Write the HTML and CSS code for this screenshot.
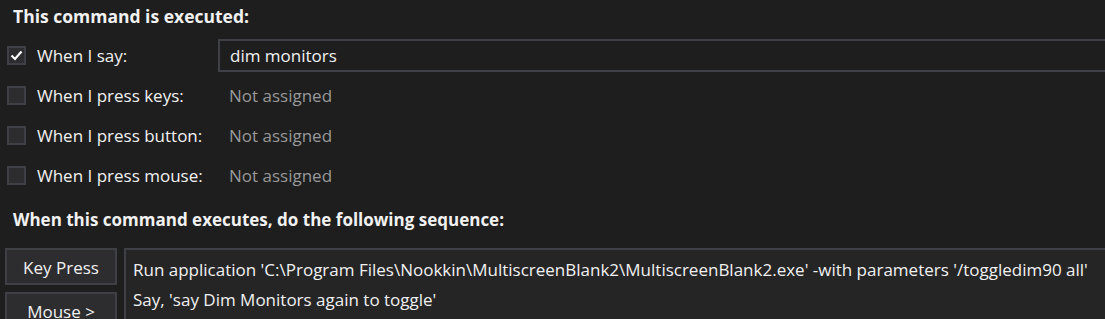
FILE: index.html
```html
<!DOCTYPE html>
<html>
<head>
<meta name="viewport" content="width=device-width, initial-scale=1">
<link rel="stylesheet" href="styles.css">
</head>
<body>

<h3 class="heading">This command is executed:</h3>

<div class="triggers">
  <div class="trigger">
    <span class="check on">
      <svg width="13" height="11" viewBox="0 0 13 11"><path d="M1.5 5.5 L5 9 L11.5 1.5" fill="none" stroke="#ffffff" stroke-width="2.2"/></svg>
    </span>
    <span class="label">When I say:</span>
    <span class="phrase">dim monitors</span>
  </div>
  <div class="trigger">
    <span class="check"></span>
    <span class="label">When I press keys:</span>
    <span class="value">Not assigned</span>
  </div>
  <div class="trigger">
    <span class="check"></span>
    <span class="label">When I press button:</span>
    <span class="value">Not assigned</span>
  </div>
  <div class="trigger">
    <span class="check"></span>
    <span class="label">When I press mouse:</span>
    <span class="value">Not assigned</span>
  </div>
</div>

<h3 class="heading second">When this command executes, do the following sequence:</h3>

<div class="sequence">
  <div class="buttons">
    <button type="button" class="seqbtn">Key Press</button>
    <button type="button" class="seqbtn">Mouse &gt;</button>
  </div>
  <div class="actions">
    <div class="action">Run application 'C:\Program Files\Nookkin\MultiscreenBlank2\MultiscreenBlank2.exe' -with parameters '/toggledim90 all'</div>
    <div class="action">Say, 'say Dim Monitors again to toggle'</div>
  </div>
</div>

</body>
</html>
```

FILE: styles.css
```css
body {
  margin: 0;
  background: #1e1e1e;
  color: #f1f1f1;
  font-family: "Open Sans", "Noto Sans", sans-serif;
  font-size: 17px;
  overflow: hidden;
  height: 319px;
}

.heading {
  margin: 0;
  padding: 2px 0 0 13px;
  font-size: 17.5px;
  font-weight: bold;
  height: 28px;
  line-height: 28px;
}

.heading.second {
  margin-top: 9px;
  font-size: 17px;
}

.triggers {
  padding: 5px 0 0 7px;
}

.trigger {
  display: flex;
  align-items: center;
  height: 40px;
}

.check {
  width: 15px;
  height: 15px;
  border: 2px solid #3f3f46;
  background: #2d2d30;
  display: flex;
  align-items: center;
  justify-content: center;
}

.label {
  width: 181px;
  padding-left: 11px;
}

.phrase {
  flex: 1;
  height: 29px;
  line-height: 29px;
  border: 2px solid #3f3f46;
  border-right: none;
  padding-left: 10px;
  margin-right: -8px;
}

.value {
  padding-left: 11px;
  color: #999999;
}

.sequence {
  display: flex;
  gap: 7px;
  padding: 14px 0 0 5px;
}

.buttons {
  width: 112px;
  display: flex;
  flex-direction: column;
  gap: 7px;
}

.seqbtn {
  height: 37px;
  background: #2d2d30;
  border: 2px solid #3f3f46;
  color: #f1f1f1;
  font-family: inherit;
  font-size: 17px;
  padding: 2px 0 0;
}

.actions {
  flex: 1;
  background: #252526;
  border: 2px solid #3f3f46;
  border-right: none;
  padding: 5px 0 0 7px;
  height: 100px;
}

.action {
  height: 30px;
  line-height: 30px;
  white-space: nowrap;
}
```
